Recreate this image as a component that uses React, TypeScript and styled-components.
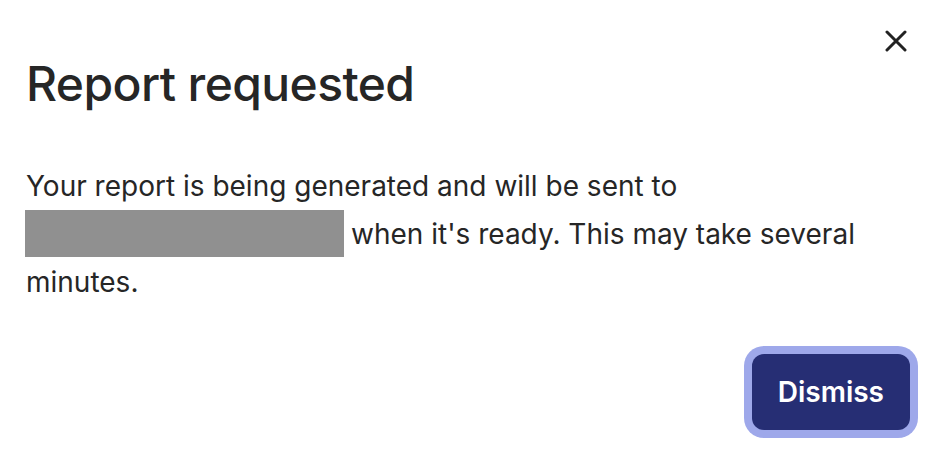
import styled, { createGlobalStyle } from 'styled-components';

const GlobalStyle = createGlobalStyle`
  html, body {
    margin: 0;
    background: #ffffff;
    font-family: Inter, "Noto Sans", sans-serif;
    color: #262626;
  }
`;

const Dialog = styled.div`
  position: relative;
  box-sizing: border-box;
  width: 948px;
  height: 454px;
  padding: 55px 30px 0 26px;
  display: flex;
  flex-direction: column;
`;

const Title = styled.h1`
  margin: 0;
  font-size: 48px;
  line-height: 57.6px;
  font-weight: 500;
  letter-spacing: -0.6px;
  color: #262626;
`;

const CloseButton = styled.button`
  position: absolute;
  top: 25px;
  right: 36px;
  width: 32px;
  height: 32px;
  padding: 0;
  border: 0;
  background: transparent;
  display: flex;
  align-items: center;
  justify-content: center;
  cursor: pointer;
`;

const Body = styled.p`
  margin: 49px 0 0;
  font-size: 28px;
  line-height: 48px;
  font-weight: 400;
  color: #262626;
`;

const Redacted = styled.span`
  display: inline-block;
  width: 319px;
  height: 47px;
  vertical-align: top;
  background: #909090;
  margin-left: -1px;
  margin-right: 7px;
`;

const Footer = styled.div`
  display: flex;
  justify-content: flex-end;
  margin-top: 48px;
  padding-right: 8px;
`;

const PrimaryButton = styled.button`
  height: 76px;
  padding: 0 26px;
  border: 0;
  border-radius: 12px;
  background: #262e74;
  color: #ffffff;
  font-family: Inter, "Noto Sans", sans-serif;
  font-size: 28px;
  font-weight: 600;
  box-shadow: 0 0 0 8px #9ea8ea;
  cursor: pointer;
`;

export default function App() {
  return (
    <>
      <GlobalStyle />
      <Dialog>
        <CloseButton aria-label="Close">
          <svg width="22" height="22" viewBox="0 0 22 22" fill="none">
            <path d="M2 2 L20 20 M20 2 L2 20" stroke="#222222" strokeWidth="3" strokeLinecap="round" />
          </svg>
        </CloseButton>
        <Title>Report requested</Title>
        <Body>
          Your report is being generated and will be sent to <Redacted />when it's ready. This may take several
          minutes.
        </Body>
        <Footer>
          <PrimaryButton>Dismiss</PrimaryButton>
        </Footer>
      </Dialog>
    </>
  );
}
